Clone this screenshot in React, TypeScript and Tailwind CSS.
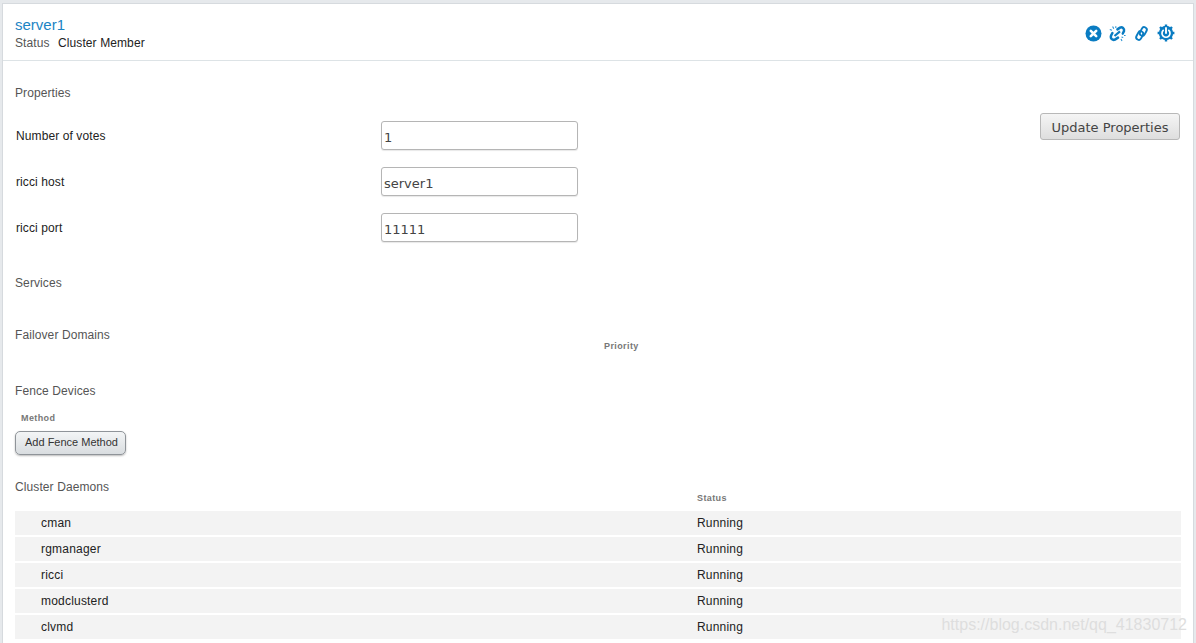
import React from "react";

const daemons = ["cman", "rgmanager", "ricci", "modclusterd", "clvmd"];

const properties = [
  { label: "Number of votes", value: "1" },
  { label: "ricci host", value: "server1" },
  { label: "ricci port", value: "11111" },
];

function SectionTitle({ children }: { children: React.ReactNode }) {
  return <h2 className="text-[12px] leading-[14px] font-normal tracking-[0.1px] text-[#555]">{children}</h2>;
}

function HeadLabel({ children }: { children: React.ReactNode }) {
  return <span className="text-[9px] leading-[12px] font-bold tracking-[0.4px] text-[#777]">{children}</span>;
}

export default function App() {
  return (
    <div className="relative h-[643px] w-[1196px] overflow-hidden bg-[#e6e9ec] pt-[4px] pl-[3px] pr-[3px] font-['Liberation_Sans',sans-serif]">
      <div className="h-[639px] w-[1190px] overflow-hidden bg-white shadow-[0_0_0_1px_#d6dade]">
        {/* Node header */}
        <header className="flex h-[57px] items-start justify-between border-b border-[#dde3e6] pl-[12px] pr-[18px]">
          <div className="pt-[12px]">
            <h1 className="text-[15px] leading-[18px] font-normal text-[#1b84c4]">server1</h1>
            <div className="mt-[2px] flex text-[12px] leading-[14px] tracking-[0.1px]">
              <span className="w-[43px] text-[#555]">Status</span>
              <span className="text-[#222]">Cluster Member</span>
            </div>
          </div>
          <div className="flex items-center gap-[7px] pt-[20px]">
            <svg width="17" height="17" viewBox="0 0 17 17">
              <circle cx="8.5" cy="8.5" r="8" fill="#0a7cc2" />
              <path d="M5.8 5.8 L11.2 11.2 M11.2 5.8 L5.8 11.2" stroke="#fff" strokeWidth="2.6" strokeLinecap="round" />
            </svg>
            <svg width="17" height="17" viewBox="0 0 17 17" fill="none">
              <path d="M3.4 8 L2 10.8 C1.2 13.5 3.6 15.6 6 14.6 L9 12.6" stroke="#0a7cc2" strokeWidth="2.5" strokeLinecap="round" />
              <path d="M8.4 4.4 L11 2.6 C13.2 1.6 15.6 3.4 15 6 L13.8 8.6" stroke="#0a7cc2" strokeWidth="2.5" strokeLinecap="round" />
              <path d="M5.5 11 L11 6.4" stroke="#0a7cc2" strokeWidth="2.2" />
              <path d="M0.8 4.4 L3 5.2 M3.6 1.4 L4.8 3.8 M6.8 1.2 L6.8 3 M12.5 12 L14.2 12.6 M12 14 L13 16 M15 10.5 L16.6 10.5" stroke="#2a93d3" strokeWidth="1.1" />
            </svg>
            <svg width="17" height="17" viewBox="0 0 17 17" fill="none">
              <rect x="2.2" y="7.9" width="9" height="5.2" rx="2.6" transform="rotate(-62 6.7 10.5)" stroke="#0a7cc2" strokeWidth="1.9" />
              <rect x="5.8" y="3.9" width="9" height="5.2" rx="2.6" transform="rotate(-62 10.3 6.5)" stroke="#0a7cc2" strokeWidth="1.9" />
            </svg>
            <svg width="18" height="18" viewBox="0 0 18 18" fill="none">
              <circle cx="9" cy="9" r="7.2" fill="#0a7cc2" />
              <path d="M9 0.6 V3 M9 15 V17.4 M0.6 9 H3 M15 9 H17.4 M3 3 L4.8 4.8 M13.2 13.2 L15 15 M15 3 L13.2 4.8 M4.8 13.2 L3 15" stroke="#0a7cc2" strokeWidth="2.4" />
              <path d="M6.2 6.4 A4 4 0 1 0 11.8 6.4" stroke="#fff" strokeWidth="1.7" strokeLinecap="round" />
              <path d="M9 4 V9" stroke="#fff" strokeWidth="1.9" strokeLinecap="round" />
            </svg>
          </div>
        </header>

        <div className="pr-[12px] pl-[12px]">
          {/* Properties */}
          <div className="flex items-start justify-between">
            <div>
              <div className="pt-[25px]">
                <SectionTitle>Properties</SectionTitle>
              </div>
              <div className="mt-[21px] flex flex-col gap-[18px]">
                {properties.map((p) => (
                  <div key={p.label} className="flex h-[28px] items-center">
                    <span className="ml-[1px] w-[365px] pt-[2px] text-[12px] tracking-[0.1px] text-[#222]">{p.label}</span>
                    <input
                      readOnly
                      value={p.value}
                      className="h-[29px] w-[197px] rounded-[3px] border border-[#b5b5b5] bg-white px-[2px] pt-[4px] font-['DejaVu_Sans',sans-serif] text-[13px] text-[#444] shadow-[0_1px_1px_#e8e8e8]"
                    />
                  </div>
                ))}
              </div>
            </div>
            <button className="mt-[52px] mr-[1px] h-[27px] w-[140px] rounded-[3px] border border-[#b8b8b8] bg-gradient-to-b from-[#f5f5f5] to-[#dedede] pt-[3px] font-['DejaVu_Sans',sans-serif] text-[13px] text-[#444]">
              Update Properties
            </button>
          </div>

          {/* Services */}
          <div className="mt-[35px]">
            <SectionTitle>Services</SectionTitle>
          </div>

          {/* Failover domains */}
          <div className="mt-[38px] flex items-start">
            <div className="w-[589px]">
              <SectionTitle>Failover Domains</SectionTitle>
            </div>
            <div className="pt-[4px]">
              <HeadLabel>Priority</HeadLabel>
            </div>
          </div>

          {/* Fence devices */}
          <div className="mt-[28px]">
            <SectionTitle>Fence Devices</SectionTitle>
          </div>
          <div className="mt-[12px] pl-[6px] leading-[12px]">
            <HeadLabel>Method</HeadLabel>
          </div>
          <button className="mt-[7px] block h-[24px] w-[111px] rounded-[5px] border border-[#8f9499] bg-gradient-to-b from-[#f3f5f6] to-[#d9dde0] pb-[2px] pl-[2px] text-[11px] text-[#333] shadow-[0_1px_2px_#bbb]">
            Add Fence Method
          </button>

          {/* Cluster daemons */}
          <div className="mt-[25px] flex items-start">
            <div className="w-[682px]">
              <SectionTitle>Cluster Daemons</SectionTitle>
            </div>
            <div className="pt-[4px]">
              <HeadLabel>Status</HeadLabel>
            </div>
          </div>
          <div className="mt-[3px] flex w-[1166px] flex-col gap-[2px]">
            {daemons.map((d) => (
              <div key={d} className="flex h-[24px] items-center bg-[#f3f3f3] text-[12px] tracking-[0.2px] text-[#222]">
                <span className="w-[682px] pl-[26px]">{d}</span>
                <span>Running</span>
              </div>
            ))}
          </div>
        </div>
      </div>
      <span className="absolute right-[9px] bottom-[9px] text-[16px] leading-[18px] text-[#dedede]">
        https://blog.csdn.net/qq_41830712
      </span>
    </div>
  );
}
